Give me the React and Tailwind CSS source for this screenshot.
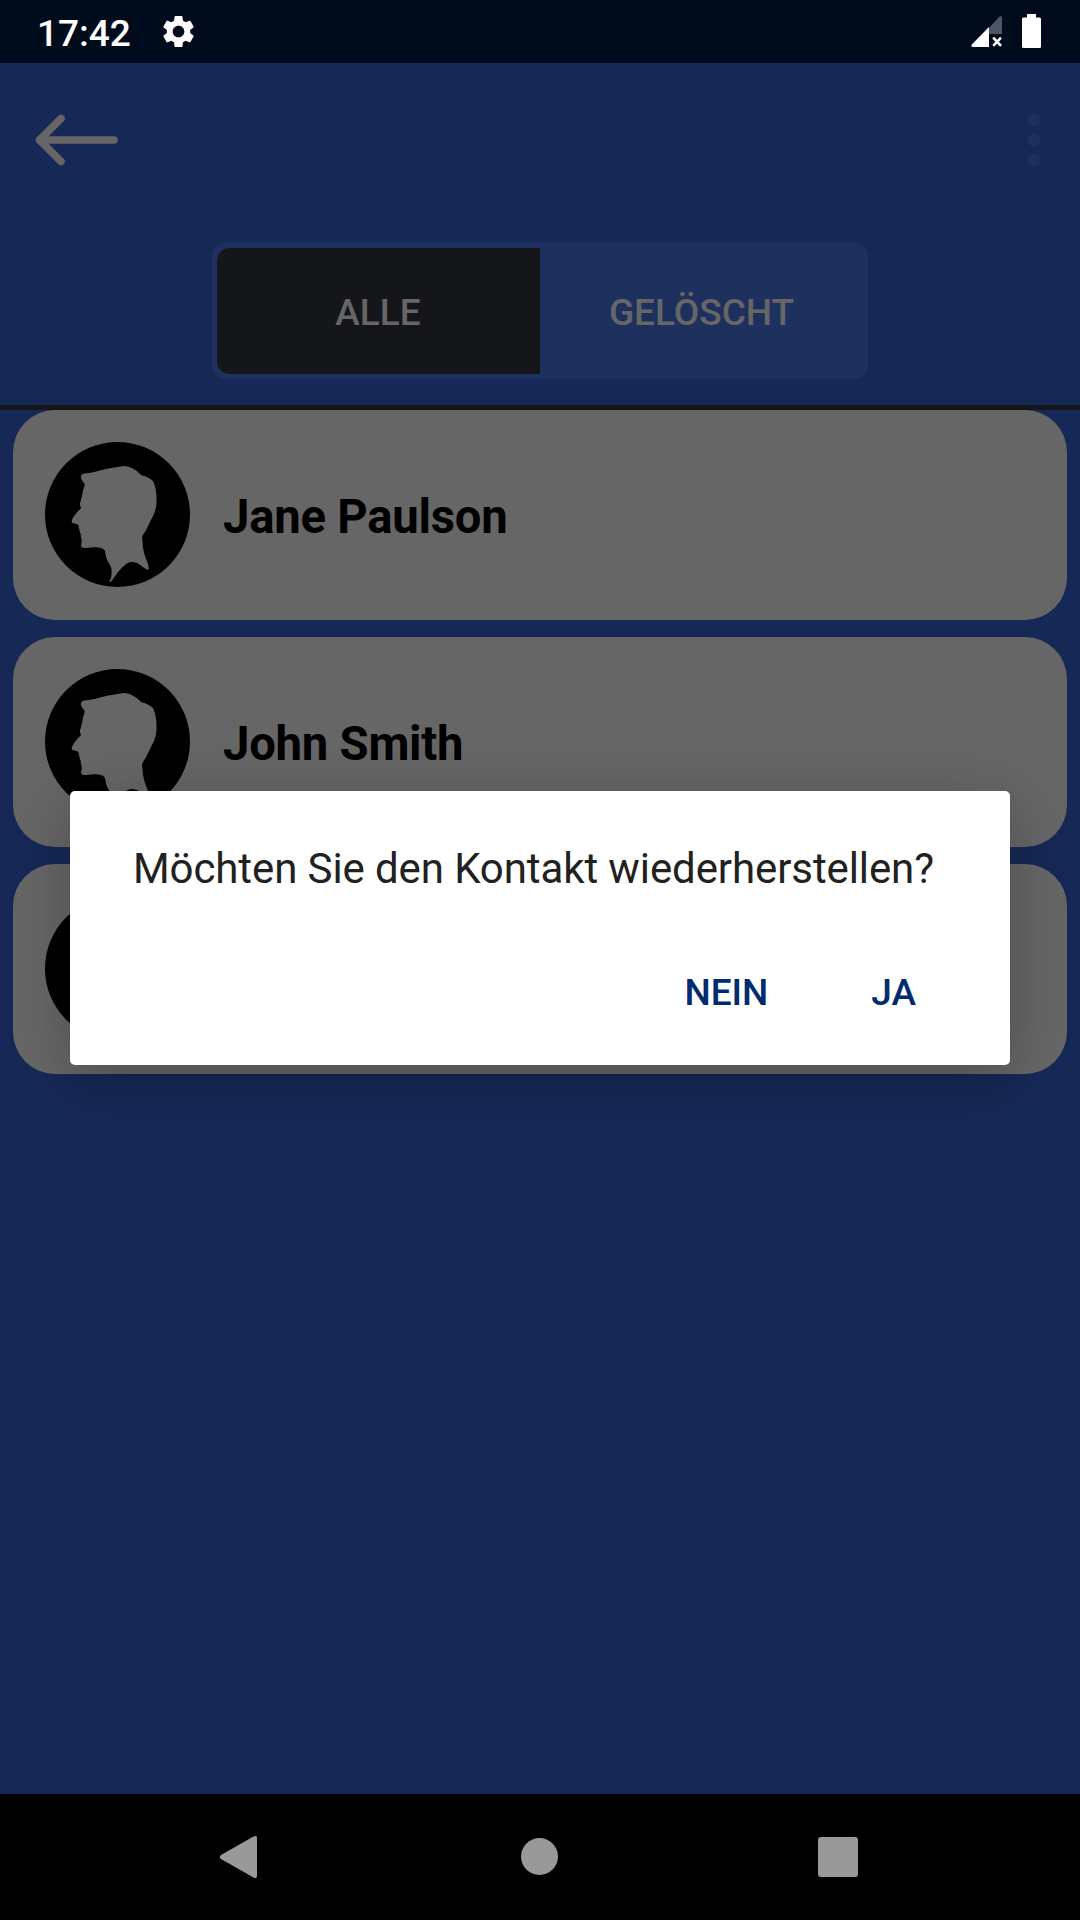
import { MdSettings } from 'react-icons/md'

const contacts = [
  { id: 1, name: 'Jane Paulson' },
  { id: 2, name: 'John Smith' },
  { id: 3, name: '' },
]

function StatusBar() {
  return (
    <div className="h-[63px] shrink-0 bg-[#000b1b] flex items-center justify-between pl-[37px] pr-[39px] text-white">
      <div className="flex items-center gap-[28px]">
        <span className="text-[37px] leading-none font-medium pt-[3px]">17:42</span>
        <MdSettings className="w-[39px] h-[39px]" />
      </div>
      <div className="flex items-center">
        <svg className="w-[31px] h-[33px]" viewBox="0 0 31 33">
          <path d="M18 13 L28.5 1.5 Q31 0 31 2.5 V19 H18 Z" fill="#4f5562" />
          <path d="M18 12 V32 H1.5 Q-0.5 31 1 29.3 Z" fill="#fff" />
          <path d="M22.2 22.7 L30 30.8 M30 22.7 L22.2 30.8" stroke="#fff" strokeWidth="2.6" />
        </svg>
        <svg className="w-[19px] h-[34px] ml-[20px] -mt-px" viewBox="0 0 19 34">
          <rect x="5" y="0" width="9" height="5" fill="#fff" />
          <rect x="0" y="3.5" width="19" height="30.5" rx="1.5" fill="#fff" />
        </svg>
      </div>
    </div>
  )
}

function Header() {
  return (
    <div className="h-[347px] shrink-0 border-b-[5px] border-[#15161a]">
      <div className="h-[152px] pt-px flex items-center justify-between pl-[35px] pr-[39px]">
        <svg className="w-[84px] h-[52px]" viewBox="0 0 84 52" fill="none" stroke="#666" strokeWidth="7.5" strokeLinecap="round" strokeLinejoin="round">
          <path d="M26 4.5 L4.5 26 L26 47.5 M4.5 26 H79" />
        </svg>
        <svg className="w-[14px] h-[56px]" viewBox="0 0 14 56" fill="#1d305e">
          <circle cx="7" cy="7.5" r="6.5" />
          <circle cx="7" cy="28" r="6.5" />
          <circle cx="7" cy="48.5" r="6.5" />
        </svg>
      </div>
      <div className="w-[656px] h-[136px] mx-auto mt-[28px] p-[5px] flex rounded-[13px] bg-[#1e305e] text-[37px] font-medium text-[#666]">
        <button className="w-1/2 pt-[3px] pr-px rounded-l-[13px] bg-[#15161a]">ALLE</button>
        <button className="w-1/2 pt-[3px]">GELÖSCHT</button>
      </div>
    </div>
  )
}

function Avatar() {
  return (
    <svg className="w-[145px] h-[145px] shrink-0 -mt-px" viewBox="45.5 66 435 435">
      <circle cx="263" cy="283.5" r="217.5" fill="#000" />
      <path
        fill="#666"
        d="M153 171 C154 163 160 160 170 160 C185 158 205 153 232 146 L281 138 C300 138 320 150 335 166 C350 170 362 176 370 184 C378 200 381 225 380 250 C379 270 372 285 362 302 C354 320 348 332 340 344 C336 350 336 355 338 364 C339 385 342 400 348 415 C353 428 357 438 357 446 C356 451 351 449 345 445 C335 438 327 431 320 428 C310 425 300 424 290 431 C272 444 260 462 248 479 C244 485 240 487 238 485 C242 478 245 473 245 464 C246 454 246 444 240 434 C228 416 228 406 226 395 C223 386 214 383 200 382 C185 382 170 385 159 383 C153 381 152 378 154 374 C156 368 156 361 155 356 C152 350 153 345 153 341 C149 338 150 334 149 330 C147 324 147 318 145 315 C138 309 130 313 126 307 C124 300 131 290 138 281 C145 272 151 268 154 264 C150 258 149 252 152 245 C155 235 158 224 160 210 L165 194 C162 185 154 182 153 171 Z"
      />
    </svg>
  )
}

function ContactCard({ name }) {
  return (
    <div className="h-[210px] flex items-center rounded-[42px] bg-[#666] pl-[32px]">
      <Avatar />
      <span className="ml-[33px] pt-[5px] text-[47.25px] tracking-[-0.24px] font-bold text-black">{name}</span>
    </div>
  )
}

function ConfirmDialog() {
  return (
    <div className="absolute left-[70px] top-[791px] w-[940px] h-[274px] rounded-[5px] bg-white shadow-[0_14px_60px_rgba(0,0,0,0.24)] flex flex-col justify-between pt-[48px] pb-[40px]">
      <p className="pl-[63px] text-[42px] leading-[60px] tracking-[-0.1px] text-[#212121] whitespace-nowrap">
        Möchten Sie den Kontakt wiederherstellen?
      </p>
      <div className="flex justify-end gap-[103px] pr-[94px] text-[37px] leading-[64px] font-medium text-[#002b6c]">
        <button>NEIN</button>
        <button>JA</button>
      </div>
    </div>
  )
}

function NavBar() {
  return (
    <div className="h-[126px] shrink-0 bg-black flex items-center pl-[219px] pr-[222px] justify-between">
      <svg className="w-[38px] h-[44px]" viewBox="0 0 38 44" fill="#999">
        <path d="M2 20 L34.5 1.5 Q38 0 38 3 V41 Q38 44 34.5 42.5 L2 24 Q-0.5 22 2 20 Z" />
      </svg>
      <div className="w-[37px] h-[37px] ml-[4px] mb-px rounded-full bg-[#999]" />
      <div className="w-[40px] h-[40px] rounded-[3px] bg-[#999]" />
    </div>
  )
}

export default function App() {
  return (
    <div className="relative w-[1080px] h-[1920px] overflow-hidden flex flex-col bg-[#162856] font-['Roboto',sans-serif]">
      <StatusBar />
      <Header />
      <div className="flex-1 flex flex-col gap-[17px] px-[13px]">
        {contacts.map((contact) => (
          <ContactCard key={contact.id} name={contact.name} />
        ))}
      </div>
      <NavBar />
      <ConfirmDialog />
    </div>
  )
}
